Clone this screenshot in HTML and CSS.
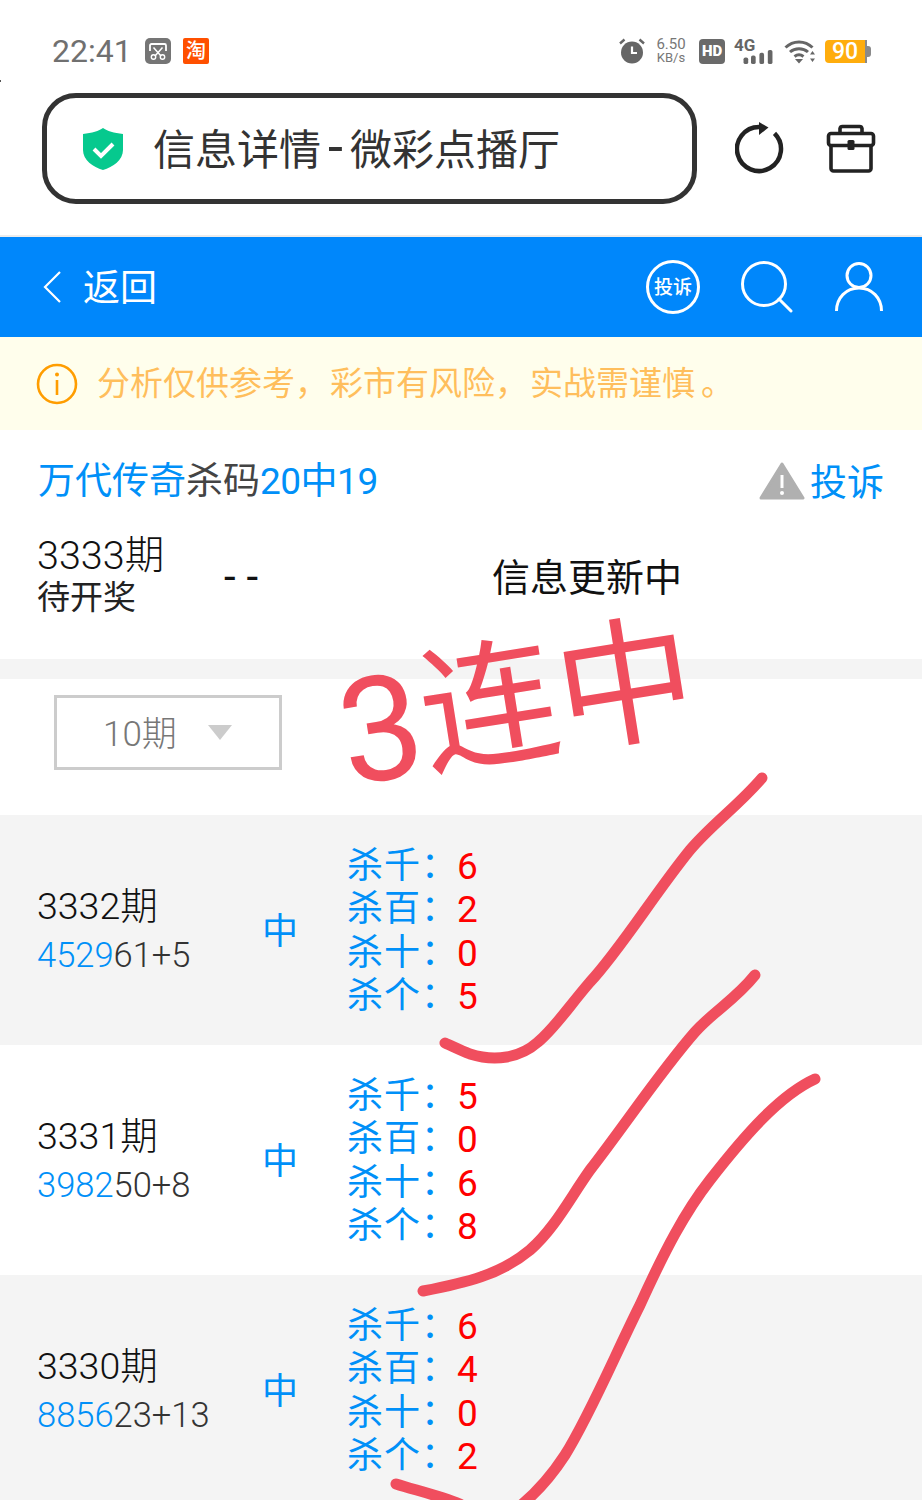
FILE: index.html
```html
<!DOCTYPE html>
<html lang="zh-CN">
<head>
    <meta charset="UTF-8">
    <meta name="viewport" content="width=device-width, initial-scale=1.0">
    <title>信息详情-微彩点播厅</title>
    <link rel="stylesheet" href="styles.css">
</head>
<body>
<div class="page">
    <div class="speck"></div>

    <div class="status">
        <span class="time">22:41</span>
        <svg class="st-icon shot" viewBox="0 0 26 26">
            <rect width="26" height="26" rx="5" fill="#757575"/>
            <path d="M5 13V7.5A1.5 1.5 0 0 1 6.500 6h13A1.500 1.500 0 0 1 21 7.500V13" fill="none" stroke="#fff" stroke-width="1.800"/>
            <path d="M8.500 9.500 16 18M17.500 9.500 10 18" fill="none" stroke="#fff" stroke-width="1.500"/>
            <circle cx="8.500" cy="19" r="2.200" fill="none" stroke="#fff" stroke-width="1.400"/>
            <circle cx="17.500" cy="19" r="2.200" fill="none" stroke="#fff" stroke-width="1.400"/>
        </svg>
        <span class="taobao">淘</span>
        <div class="status-right">
            <svg class="alarm" viewBox="0 0 28 28">
                <circle cx="14" cy="15.500" r="11" fill="#666"/>
                <path d="M14 9.500v6.500h5" fill="none" stroke="#fff" stroke-width="2.200"/>
                <path d="M2 6.500 6.500 2.500M26 6.500 21.500 2.500" stroke="#666" stroke-width="2.400"/>
            </svg>
            <div class="speed"><span>6.50</span><span class="speed-unit">KB/s</span></div>
            <span class="hd">HD</span>
            <div class="signal">
                <span class="net">4G</span>
                <svg class="bars" viewBox="0 0 31 15">
                    <rect x="0" y="8" width="5" height="7" rx="2" fill="#666"/>
                    <rect x="8" y="6" width="5" height="9" rx="2" fill="#666"/>
                    <rect x="17" y="3" width="5" height="12" rx="2" fill="#666"/>
                    <rect x="26" y="0" width="5" height="15" rx="2" fill="#666"/>
                </svg>
            </div>
            <svg class="wifi" viewBox="0 0 32 26">
                <path d="M1.500 9.500C9 2 21 2 28.500 9.500M6 14c5-4.500 13-4.500 18 0M10.500 18.500c3-2.400 6-2.400 9 0" fill="none" stroke="#666" stroke-width="3"/>
                <path d="M15 25.500l-4-4.500h8zM28.500 13l-2.500 3.500h5zM28.500 24l-2.500-3.500h5z" fill="#666"/>
            </svg>
            <div class="battery"><span class="battery-level">90</span><span class="battery-rest"></span><span class="battery-tip"></span></div>
        </div>
    </div>

    <div class="address">
        <div class="url-bar">
            <svg class="shield" viewBox="0 0 40 42">
                <path d="M20 0C24 3 31 5 40 6V22C40 32 30 39 20 42C10 39 0 32 0 22V6C9 5 16 3 20 0Z" fill="#06c98e"/>
                <path d="M11 21l7 7 12-12" fill="none" stroke="#fff" stroke-width="4"/>
            </svg>
            <span class="url-title">信息详情<span class="url-dash">-</span>微彩点播厅</span>
        </div>
        <svg class="reload" viewBox="0 0 50 54">
            <path d="M39.500 13.400A22 22 0 1 1 24 7" fill="none" stroke="#222" stroke-width="4.500"/>
            <path d="M24 2l9.500 5.500L24 15z" fill="#222"/>
        </svg>
        <svg class="toolbox" viewBox="0 0 50 50">
            <path d="M14 9V4.500A2.500 2.500 0 0 1 16.500 2.500h17A2.500 2.500 0 0 1 36 4.500V9" fill="none" stroke="#222" stroke-width="3.600"/>
            <rect x="2.500" y="9.500" width="45" height="12" rx="2.500" fill="none" stroke="#222" stroke-width="3.600"/>
            <path d="M5 21V44.500A2.500 2.500 0 0 0 7.500 47h35a2.500 2.500 0 0 0 2.500-2.500V21" fill="none" stroke="#222" stroke-width="3.600"/>
            <rect x="21.500" y="16" width="7" height="10" rx="1.500" fill="#222"/>
        </svg>
    </div>

    <div class="nav">
        <svg class="back" viewBox="0 0 20 34"><path d="M18 2 3 17l15 15" fill="none" stroke="#fff" stroke-width="2.200"/></svg>
        <span class="back-text">返回</span>
        <div class="nav-icons">
            <span class="report-badge">投诉</span>
            <svg class="search" viewBox="0 0 52 52">
                <circle cx="23" cy="23" r="21.500" fill="none" stroke="#fff" stroke-width="3"/>
                <path d="M38 38 50 50" stroke="#fff" stroke-width="3" stroke-linecap="round"/>
            </svg>
            <svg class="user" viewBox="0 0 48 50">
                <circle cx="24" cy="13.500" r="12" fill="none" stroke="#fff" stroke-width="3"/>
                <path d="M1.500 49C1.500 36 11 26 24 26S46.500 36 46.500 49" fill="none" stroke="#fff" stroke-width="3"/>
            </svg>
        </div>
    </div>

    <div class="notice">
        <svg class="info" viewBox="0 0 42 42">
            <circle cx="21" cy="21" r="19" fill="none" stroke="#ff9d00" stroke-width="2.600"/>
            <circle cx="21" cy="11.500" r="2" fill="#ff9d00"/>
            <path d="M21 17v15" stroke="#ff9d00" stroke-width="2.600"/>
        </svg>
        <span class="notice-text">分析仅供参考<span class="notice-comma">，</span>彩市有风险<span class="notice-comma">，</span>实战需谨慎<span class="notice-stop">。</span></span>
    </div>

    <section class="summary">
        <div class="summary-head">
            <h1 class="summary-title"><span class="blue">万代传奇</span>杀码<span class="blue title-num">20中19</span></h1>
            <div class="report">
                <svg class="warn" viewBox="0 0 46 38">
                    <path d="M23 2 44 36H2Z" fill="#b0b0b0" stroke="#b0b0b0" stroke-width="3" stroke-linejoin="round"/>
                    <path d="M23 13v13" stroke="#fff" stroke-width="3"/>
                    <circle cx="23" cy="31" r="2" fill="#fff"/>
                </svg>
                <span class="blue">投诉</span>
            </div>
        </div>
        <div class="current">
            <div class="current-issue">
                <div class="current-no">3333期</div>
                <div class="current-state">待开奖</div>
            </div>
            <div class="current-dash">--</div>
            <div class="current-msg">信息更新中</div>
        </div>
    </section>

    <div class="filter">
        <div class="select"><span class="select-text">10期</span><i class="caret"></i></div>
    </div>

    <div class="row row-grey">
        <div class="issue">
            <div class="issue-no">3332期</div>
            <div class="issue-code"><span class="blue">4529</span>61+5</div>
        </div>
        <div class="hit">中</div>
        <div class="kills">
            <div class="kill"><span class="kill-name">杀千：</span><span class="kill-val">6</span></div>
            <div class="kill"><span class="kill-name">杀百：</span><span class="kill-val">2</span></div>
            <div class="kill"><span class="kill-name">杀十：</span><span class="kill-val">0</span></div>
            <div class="kill"><span class="kill-name">杀个：</span><span class="kill-val">5</span></div>
        </div>
    </div>
    <div class="row">
        <div class="issue">
            <div class="issue-no">3331期</div>
            <div class="issue-code"><span class="blue">3982</span>50+8</div>
        </div>
        <div class="hit">中</div>
        <div class="kills">
            <div class="kill"><span class="kill-name">杀千：</span><span class="kill-val">5</span></div>
            <div class="kill"><span class="kill-name">杀百：</span><span class="kill-val">0</span></div>
            <div class="kill"><span class="kill-name">杀十：</span><span class="kill-val">6</span></div>
            <div class="kill"><span class="kill-name">杀个：</span><span class="kill-val">8</span></div>
        </div>
    </div>
    <div class="row row-grey">
        <div class="issue">
            <div class="issue-no">3330期</div>
            <div class="issue-code"><span class="blue">8856</span>23+13</div>
        </div>
        <div class="hit">中</div>
        <div class="kills">
            <div class="kill"><span class="kill-name">杀千：</span><span class="kill-val">6</span></div>
            <div class="kill"><span class="kill-name">杀百：</span><span class="kill-val">4</span></div>
            <div class="kill"><span class="kill-name">杀十：</span><span class="kill-val">0</span></div>
            <div class="kill"><span class="kill-name">杀个：</span><span class="kill-val">2</span></div>
        </div>
    </div>

    <!-- red marks written over the screenshot -->
    <div class="scrawl"><span class="scrawl-num">3</span>连中</div>
    <svg class="marks" viewBox="0 0 922 1500">
        <path d="M762 778C738 806 712 824 690 850C655 893 620 950 590 982C570 1005 555 1028 538 1042C520 1058 495 1062 470 1054C460 1050 452 1046 445 1043"/>
        <path d="M755 975C735 1000 715 1010 695 1032C660 1072 625 1125 590 1170C570 1198 555 1228 530 1250C500 1275 465 1283 423 1291"/>
        <path d="M815 1079C780 1095 745 1135 710 1180C685 1212 665 1250 640 1305C615 1355 590 1415 565 1455C550 1478 535 1495 515 1510"/>
        <path d="M396 1484C415 1490 440 1496 460 1504"/>
    </svg>
</div>
</body>
</html>
```

FILE: styles.css
```css
* {
    box-sizing: border-box;
}
html, body {
    margin: 0;
    background-color: #fff;
}
.page {
    position: relative;
    width: 922px;
    height: 1500px;
    overflow: hidden;
    font-family: Roboto, "Noto Sans CJK SC", sans-serif;
    color: #222;
}
.blue {
    color: #0090f8;
}
.speck {
    position: absolute;
    left: 0;
    top: 80px;
    width: 1px;
    height: 2px;
    background-color: #555;
}

/* status bar */
.status {
    height: 93px;
    padding: 9px 51px 0 52px;
    display: flex;
    align-items: center;
}
.time {
    font-size: 32px;
    color: #707070;
    width: 93px;
}
.shot {
    width: 26px;
    height: 26px;
}
.taobao {
    margin-left: 12px;
    width: 26px;
    height: 26px;
    border-radius: 2px;
    background-color: #ff5000;
    color: #fff;
    font-size: 20px;
    font-weight: 500;
    line-height: 26px;
    text-align: center;
}
.status-right {
    margin-left: auto;
    display: flex;
    align-items: center;
}
.alarm {
    width: 28px;
    height: 28px;
}
.speed {
    margin-left: 9px;
    width: 32px;
    display: flex;
    flex-direction: column;
    align-items: center;
    font-size: 15px;
    line-height: 13px;
    color: #777;
}
.speed-unit {
    font-size: 13px;
}
.hd {
    margin-left: 12px;
    width: 26px;
    height: 25px;
    border-radius: 4px;
    background-color: #6a6a6a;
    color: #fff;
    font-size: 15px;
    font-weight: 900;
    line-height: 25px;
    text-align: center;
}
.signal {
    margin-left: 9px;
    width: 39px;
    display: flex;
    flex-direction: column;
}
.net {
    font-size: 17px;
    font-weight: 700;
    line-height: 12px;
    color: #666;
}
.bars {
    width: 30px;
    height: 14px;
    margin-left: 9px;
    margin-top: -1px;
}
.wifi {
    margin-left: 11px;
    width: 32px;
    height: 26px;
}
.battery {
    margin-left: 9px;
    display: flex;
    align-items: center;
    height: 23px;
}
.battery-level {
    width: 40px;
    height: 23px;
    border-radius: 4px 0 0 4px;
    background-color: #ffad0d;
    color: #fff;
    font-size: 23px;
    font-weight: 500;
    line-height: 23px;
    text-align: center;
}
.battery-rest {
    width: 2px;
    height: 23px;
    background-color: #8a8a8a;
}
.battery-tip {
    width: 4px;
    height: 11px;
    border-radius: 0 3px 3px 0;
    background-color: #8a8a8a;
}

/* address row */
.address {
    height: 144px;
    padding-left: 42px;
    display: flex;
    align-items: flex-start;
    border-bottom: 2px solid #ececec;
}
.url-bar {
    width: 655px;
    height: 111px;
    border: 5px solid #333;
    border-radius: 34px;
    padding-left: 36px;
    display: flex;
    align-items: center;
}
.shield {
    width: 40px;
    height: 42px;
}
.url-title {
    margin-left: 30px;
    font-size: 42px;
    line-height: 60px;
    color: #333;
}
.url-dash {
    margin: 0 7px;
    font-size: 54px;
}
.reload {
    margin-left: 38px;
    margin-top: 27px;
    width: 50px;
    height: 54px;
}
.toolbox {
    margin-left: 41px;
    margin-top: 31px;
    width: 50px;
    height: 50px;
}

/* blue nav */
.nav {
    height: 100px;
    padding: 0 39px 0 42px;
    background-color: #0087fb;
    display: flex;
    align-items: center;
    color: #fff;
}
.back {
    width: 20px;
    height: 34px;
}
.back-text {
    margin-left: 21px;
    padding-bottom: 5px;
    font-size: 37px;
}
.nav-icons {
    margin-left: auto;
    display: flex;
    align-items: center;
}
.report-badge {
    width: 54px;
    height: 54px;
    border: 3px solid #fff;
    border-radius: 50%;
    font-size: 19px;
    font-weight: 500;
    line-height: 50px;
    text-align: center;
    white-space: nowrap;
}
.search {
    margin-left: 41px;
    width: 52px;
    height: 52px;
}
.user {
    margin-left: 42px;
    width: 48px;
    height: 50px;
}

/* notice */
.notice {
    height: 93px;
    padding-left: 36px;
    background-color: #fffeec;
    display: flex;
    align-items: center;
    font-size: 33px;
    color: #ffbe5c;
    white-space: nowrap;
}
.notice-text {
    padding-bottom: 5px;
}
.notice-comma {
    margin-right: 2px;
}
.notice-stop {
    margin-left: 6px;
}
.info {
    width: 42px;
    height: 42px;
    margin-right: 19px;
}

/* summary */
.summary {
    height: 229px;
    padding: 22px 38px 0 37px;
}
.summary-head {
    display: flex;
    justify-content: space-between;
    align-items: center;
    height: 52px;
}
.summary-title {
    margin: 0 0 0 1px;
    font-size: 37px;
    font-weight: 400;
    color: #444;
}
.title-num {
    letter-spacing: -0.5px;
}
.report {
    margin-top: 4px;
    display: flex;
    align-items: center;
    font-size: 37px;
}
.warn {
    width: 46px;
    height: 38px;
    margin-right: 5px;
    margin-top: 2px;
}
.current {
    margin-top: 28px;
    display: flex;
    align-items: center;
}
.current-issue {
    width: 187px;
}
.current-no {
    font-size: 39.500px;
    font-weight: 300;
    line-height: 48px;
    color: #111;
}
.current-state {
    font-size: 33px;
    line-height: 36px;
    color: #222;
}
.current-dash {
    width: 268px;
    padding-top: 4px;
    font-size: 42px;
    letter-spacing: 11px;
    color: #111;
}
.current-msg {
    font-size: 38px;
    color: #111;
}

/* filter */
.filter {
    height: 156px;
    padding: 16px 0 0 54px;
    border-top: 20px solid #f4f4f4;
}
.select {
    width: 228px;
    height: 75px;
    border: 3px solid #ccc;
    padding-left: 46px;
    display: flex;
    align-items: center;
    font-size: 35px;
    font-weight: 300;
    color: #777;
}
.select-text {
    padding-bottom: 5px;
}
.caret {
    margin-left: 31px;
    width: 0;
    height: 0;
    border-left: 12px solid transparent;
    border-right: 12px solid transparent;
    border-top: 15px solid #ccc;
}

/* history rows */
.row {
    height: 230px;
    padding-left: 37px;
    display: flex;
    align-items: center;
}
.row-grey {
    background-color: #f4f4f4;
}
.issue {
    width: 225px;
    margin-top: 3px;
}
.issue-no {
    font-size: 37.500px;
    font-weight: 300;
    line-height: 47px;
    color: #111;
}
.issue-code {
    font-size: 34.500px;
    font-weight: 300;
    line-height: 50px;
    color: #333;
}
.hit {
    width: 85px;
    padding-bottom: 4px;
    font-size: 36px;
    color: #0090f8;
}
.kills {
    margin-top: 3px;
}
.kill {
    display: flex;
    height: 43.600px;
    align-items: center;
    font-size: 36px;
}
.kill-name {
    flex: none;
    width: 110px;
    padding-bottom: 9px;
    letter-spacing: 1px;
    white-space: nowrap;
    color: #0090f8;
}
.kill-val {
    font-size: 37px;
    color: #f00;
}

/* hand drawn marks */
.scrawl {
    position: absolute;
    left: 354px;
    top: 646px;
    font-size: 138px;
    line-height: 170px;
    color: #f04e5e;
    white-space: nowrap;
    transform: rotate(-9deg);
    transform-origin: left bottom;
}
.scrawl-num {
    font-size: 146px;
    vertical-align: -7px;
}
.marks {
    position: absolute;
    left: 0;
    top: 0;
    width: 922px;
    height: 1500px;
    fill: none;
    stroke: #f04e5e;
    stroke-width: 11;
    stroke-linecap: round;
    stroke-linejoin: round;
}
```
